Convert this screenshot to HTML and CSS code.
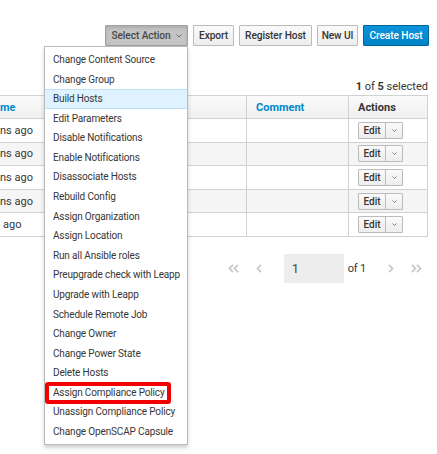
FILE: index.html
```html
<!DOCTYPE html>
<html>
<head>
<meta charset="utf-8">
<link rel="stylesheet" href="styles.css">
</head>
<body>
<div class="page">
  <div class="toolbar">
    <div class="dropdown">
      <button class="btn btn-active">Select Action <svg class="caret" width="6" height="4" viewBox="0 0 6 4"><path d="M0.5 0.5 L3 3 L5.5 0.5" fill="none" stroke="#6a6a6a" stroke-width="1"/></svg></button>
      <ul class="menu">
        <li>Change Content Source</li>
        <li>Change Group</li>
        <li class="hover">Build Hosts</li>
        <li>Edit Parameters</li>
        <li>Disable Notifications</li>
        <li>Enable Notifications</li>
        <li>Disassociate Hosts</li>
        <li>Rebuild Config</li>
        <li>Assign Organization</li>
        <li>Assign Location</li>
        <li>Run all Ansible roles</li>
        <li>Preupgrade check with Leapp</li>
        <li>Upgrade with Leapp</li>
        <li>Schedule Remote Job</li>
        <li>Change Owner</li>
        <li>Change Power State</li>
        <li>Delete Hosts</li>
        <li class="marked">Assign Compliance Policy<span class="mark"></span></li>
        <li>Unassign Compliance Policy</li>
        <li>Change OpenSCAP Capsule</li>
      </ul>
    </div>
    <button class="btn b-export">Export</button>
    <button class="btn b-register">Register Host</button>
    <button class="btn b-newui">New UI</button>
    <button class="btn btn-primary">Create Host</button>
  </div>

  <div class="selected"><b>1</b> of <b>5</b> selected</div>

  <div class="grid">
    <div class="row head">
      <div class="cell first link">me</div>
      <div class="cell link">Comment</div>
      <div class="cell last">Actions</div>
    </div>
    <div class="row">
      <div class="cell first">ns ago</div>
      <div class="cell"></div>
      <div class="cell last"><span class="split"><span class="edit">Edit</span><span class="ecaret"><svg width="5" height="3" viewBox="0 0 5 3"><path d="M0.5 0.5 L2.5 2.5 L4.5 0.5" fill="none" stroke="#777" stroke-width="0.9"/></svg></span></span></div>
    </div>
    <div class="row alt">
      <div class="cell first">ns ago</div>
      <div class="cell"></div>
      <div class="cell last"><span class="split"><span class="edit">Edit</span><span class="ecaret"><svg width="5" height="3" viewBox="0 0 5 3"><path d="M0.5 0.5 L2.5 2.5 L4.5 0.5" fill="none" stroke="#777" stroke-width="0.9"/></svg></span></span></div>
    </div>
    <div class="row">
      <div class="cell first">ns ago</div>
      <div class="cell"></div>
      <div class="cell last"><span class="split"><span class="edit">Edit</span><span class="ecaret"><svg width="5" height="3" viewBox="0 0 5 3"><path d="M0.5 0.5 L2.5 2.5 L4.5 0.5" fill="none" stroke="#777" stroke-width="0.9"/></svg></span></span></div>
    </div>
    <div class="row alt">
      <div class="cell first">ns ago</div>
      <div class="cell"></div>
      <div class="cell last"><span class="split"><span class="edit">Edit</span><span class="ecaret"><svg width="5" height="3" viewBox="0 0 5 3"><path d="M0.5 0.5 L2.5 2.5 L4.5 0.5" fill="none" stroke="#777" stroke-width="0.9"/></svg></span></span></div>
    </div>
    <div class="row">
      <div class="cell first indent">ago</div>
      <div class="cell"></div>
      <div class="cell last"><span class="split"><span class="edit">Edit</span><span class="ecaret"><svg width="5" height="3" viewBox="0 0 5 3"><path d="M0.5 0.5 L2.5 2.5 L4.5 0.5" fill="none" stroke="#777" stroke-width="0.9"/></svg></span></span></div>
    </div>
  </div>

  <div class="pager">
    <svg class="p-first" width="11" height="9" viewBox="0 0 11 9"><path d="M5 0.8 L1.5 4.5 L5 8.2 M10 0.8 L6.5 4.5 L10 8.2" fill="none" stroke="#c8c8c8" stroke-width="1.8"/></svg>
    <svg class="p-prev" width="6" height="9" viewBox="0 0 6 9"><path d="M5 0.8 L1.5 4.5 L5 8.2" fill="none" stroke="#c8c8c8" stroke-width="1.8"/></svg>
    <span class="p-input">1</span>
    <span class="p-of">of 1</span>
    <svg class="p-next" width="6" height="9" viewBox="0 0 6 9"><path d="M1 0.8 L4.5 4.5 L1 8.2" fill="none" stroke="#c8c8c8" stroke-width="1.8"/></svg>
    <svg class="p-last" width="11" height="9" viewBox="0 0 11 9"><path d="M1 0.8 L4.5 4.5 L1 8.2 M6 0.8 L9.5 4.5 L6 8.2" fill="none" stroke="#c8c8c8" stroke-width="1.8"/></svg>
  </div>
</div>
</body>
</html>
```

FILE: styles.css
```css
html, body {
  margin: 0;
  padding: 0;
  background: #fff;
}
body {
  font-family: Roboto, "Liberation Sans", sans-serif;
  color: #363636;
  font-size: 10.5px;
}
.page {
  width: 437px;
  height: 454px;
  overflow: hidden;
}
.toolbar {
  display: flex;
  justify-content: flex-end;
  gap: 5px;
  padding: 25px 8px 0 0;
}
.dropdown {
  position: relative;
  flex-shrink: 0;
}
.btn {
  box-sizing: border-box;
  flex-shrink: 0;
  height: 21px;
  padding: 0;
  font-family: inherit;
  font-size: 10.2px;
  font-weight: 500;
  color: #363636;
  background: linear-gradient(#fafafa, #ededed);
  border: 1px solid #bbb;
  border-radius: 1px;
  display: flex;
  align-items: center;
  justify-content: center;
  white-space: nowrap;
  letter-spacing: -0.1px;
}
.b-export { width: 41px; }
.b-register { width: 73px; }
.b-newui { width: 41px; }
.btn-active {
  width: 83px;
  background: #c4c4c4;
  border-color: #a0a0a0;
  box-shadow: inset 0 2px 3px rgba(0,0,0,0.12);
  color: #4a4a4a;
}
.caret {
  margin-left: 5px;
}
.btn-primary {
  width: 66px;
  background: linear-gradient(#0c93da, #0083c7);
  border-color: #00659c;
  color: #fff;
}
.menu {
  position: absolute;
  top: 100%;
  right: 0;
  width: 144px;
  box-sizing: border-box;
  margin: 0;
  padding: 3px 0 2px;
  list-style: none;
  background: #fff;
  border: 1px solid #bbb;
  box-shadow: 0 3px 4px rgba(0,0,0,0.18);
  z-index: 5;
}
.menu li {
  position: relative;
  height: 19.58px;
  line-height: 19.58px;
  padding: 0 8px;
  font-size: 10px;
  letter-spacing: -0.15px;
  color: #363636;
  white-space: nowrap;
}
.menu li.hover {
  background: #def3ff;
  box-shadow: inset 0 1px 0 #bee1f4, inset 0 -1px 0 #bee1f4;
}
.mark {
  position: absolute;
  left: 0;
  top: -1px;
  width: 126px;
  height: 22px;
  box-sizing: border-box;
  border: 4px solid #f20000;
  border-radius: 3px;
}
.selected {
  margin-top: 32px;
  height: 17px;
  line-height: 17px;
  text-align: right;
  padding-right: 9px;
  font-size: 11px;
}
.selected b {
  font-weight: 700;
}
.grid {
  margin-top: 0;
  width: 428px;
  border-top: 1px solid #d1d1d1;
}
.row {
  display: grid;
  grid-template-columns: 246px 102px 80px;
  height: 23.6px;
  box-sizing: border-box;
  border-bottom: 1px solid #d1d1d1;
}
.row.head {
  height: 23px;
  background: linear-gradient(#fafafa, #f0f0f0);
}
.row.alt {
  background: #f5f5f5;
}
.cell {
  display: flex;
  align-items: center;
  padding-left: 9px;
  font-size: 11px;
  border-left: 1px solid #d1d1d1;
}
.cell.first {
  border-left: none;
  padding-left: 0;
  font-size: 11px;
}
.cell.indent {
  padding-left: 3px;
}
.cell.last {
  border-right: 1px solid #d1d1d1;
}
.head .cell {
  font-weight: 700;
  font-size: 11px;
}
.head .link {
  color: #0088ce;
}
.split {
  display: inline-flex;
  height: 17px;
  box-sizing: border-box;
  border: 1px solid #bbb;
  border-radius: 1px;
  background: linear-gradient(#fafafa, #ededed);
}
.edit {
  width: 26px;
  display: flex;
  align-items: center;
  justify-content: center;
  font-size: 10px;
  font-weight: 500;
  border-right: 1px solid #bbb;
}
.ecaret {
  width: 16px;
  display: flex;
  align-items: center;
  justify-content: center;
}
.pager {
  display: flex;
  justify-content: flex-end;
  align-items: center;
  margin-top: 17px;
  height: 29px;
  padding-right: 15px;
}
.p-first { margin-right: 17px; }
.p-prev { margin-right: 22px; }
.p-input {
  width: 60px;
  height: 29px;
  box-sizing: border-box;
  background: #ededed;
  padding-left: 8px;
  line-height: 29px;
  font-size: 13px;
  color: #4a4a4a;
  margin-right: 4px;
}
.p-of {
  font-size: 11px;
  letter-spacing: -0.2px;
  margin-right: 22px;
  color: #363636;
}
.p-next { margin-right: 17px; }
```
